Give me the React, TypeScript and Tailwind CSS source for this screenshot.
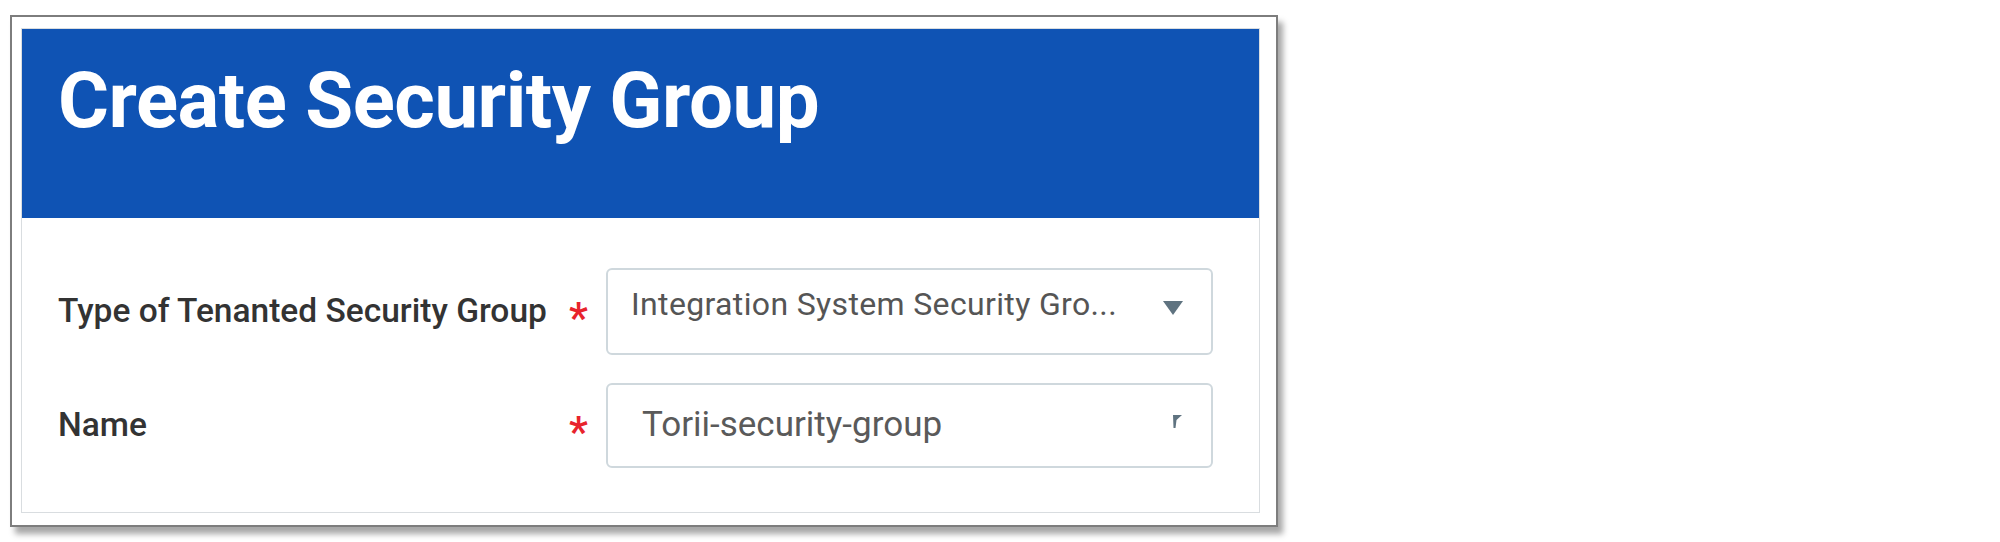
export default function App() {
  return (
    <div className="w-[2000px] h-[542px] bg-white font-['Roboto',sans-serif]">
      <div className="pt-[15px] pl-[10px]">
        <div className="w-[1268px] h-[512px] border-2 border-[#7d7d7d] bg-white shadow-[5px_7px_6px_rgba(0,0,0,0.35)] pt-[11px] pl-[9px] pr-[16px] pb-[12px]">
          <div className="h-full border border-[#d9dde0] flex flex-col">
            <div className="h-[189px] bg-[#0f53b4] pl-[36px] pt-[26px]">
              <h1 className="text-[78px] leading-[92px] font-bold text-white tracking-[-0.5px]">Create Security Group</h1>
            </div>
            <div className="flex flex-col gap-[28px] pt-[50px]">
              <div className="flex items-center">
                <label className="w-[547px] pl-[36px] text-[33.5px] font-medium text-[#333]">Type of Tenanted Security Group</label>
                <span className="w-[37px] text-[42px] font-semibold text-[#e8232c] translate-y-[6px]">*</span>
                <div className="w-[607px] h-[87px] border-2 border-[#cfd8dd] rounded-[6px] flex items-center justify-between pl-[23px] pr-[28px]">
                  <span className="text-[32px] text-[#555] tracking-[0.35px] truncate pb-[16px]">Integration System Security Gro...</span>
                  <svg width="20" height="14" viewBox="0 0 20 14" className="mb-[8px] shrink-0">
                    <path d="M0 0h20L10 14z" fill="#5f7380" />
                  </svg>
                </div>
              </div>
              <div className="flex items-center">
                <label className="w-[547px] pl-[36px] text-[33.5px] font-medium text-[#333]">Name</label>
                <span className="w-[37px] text-[42px] font-semibold text-[#e8232c] translate-y-[6px]">*</span>
                <div className="w-[607px] h-[85px] border-2 border-[#cfd8dd] rounded-[6px] flex items-center justify-between pl-[34px] pr-[28px]">
                  <span className="text-[35px] text-[#5a5a5a]">Torii-security-group</span>
                  <svg width="10" height="13" viewBox="0 0 10 13" className="mb-[8px] shrink-0">
                    <path d="M0 0H9L3.5 5L2.5 13H0.5Z" fill="#5f7380" />
                  </svg>
                </div>
              </div>
            </div>
          </div>
        </div>
      </div>
    </div>
  )
}
